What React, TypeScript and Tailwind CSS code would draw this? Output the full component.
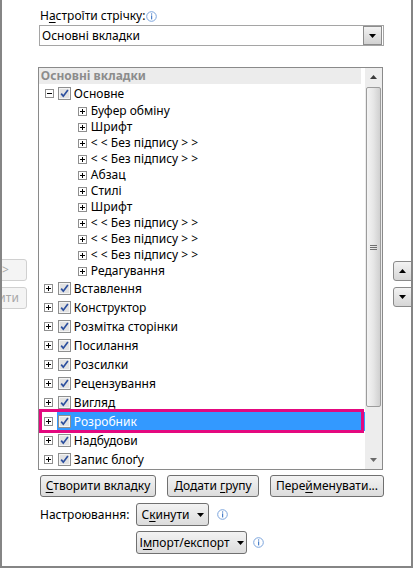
import React from "react";

const childGroups = [
  "Буфер обміну",
  "Шрифт",
  "< < Без підпису > >",
  "< < Без підпису > >",
  "Абзац",
  "Стилі",
  "Шрифт",
  "< < Без підпису > >",
  "< < Без підпису > >",
  "< < Без підпису > >",
  "Редагування",
];

const mainTabs = [
  "Вставлення",
  "Конструктор",
  "Розмітка сторінки",
  "Посилання",
  "Розсилки",
  "Рецензування",
  "Вигляд",
  "Розробник",
  "Надбудови",
  "Запис блоґу",
];

function Expander({ open = false }: { open?: boolean }) {
  return (
    <svg width="9" height="9" className="shrink-0">
      <rect x="0.5" y="0.5" width="8" height="8" fill="#fff" stroke="#8f8f8f" />
      <path d="M2 4.5h5" stroke="#000" />
      {!open && <path d="M4.5 2v5" stroke="#000" />}
    </svg>
  );
}

function Check() {
  return (
    <svg width="13" height="13" className="shrink-0">
      <rect x="0.5" y="0.5" width="12" height="12" fill="#f4f4f4" stroke="#8e8f8f" />
      <rect x="2" y="2" width="9" height="9" fill="#e2e2e2" />
      <path d="M3.2 6.6l2.1 2.6 4.6-6.2" fill="none" stroke="#2c4f9e" strokeWidth="1.7" />
    </svg>
  );
}

function Info() {
  return (
    <svg width="11" height="11" className="shrink-0">
      <circle cx="5.5" cy="5.5" r="4.8" fill="#fff" stroke="#7ba4dc" />
      <rect x="5" y="2.4" width="1.2" height="1.2" fill="#4a7fc8" />
      <rect x="5" y="4.4" width="1.2" height="4" fill="#4a7fc8" />
    </svg>
  );
}

function Caret() {
  return (
    <svg width="7" height="4" className="shrink-0">
      <path d="M0 0h7L3.5 4z" fill="#000" />
    </svg>
  );
}

function Btn({ className, children }: { className: string; children: React.ReactNode }) {
  return (
    <div
      className={`flex items-center justify-center gap-[7px] rounded-[3px] border border-[#707070] bg-gradient-to-b from-[#f3f3f3] to-[#dcdcdc] text-[12px] text-black ${className}`}
    >
      {children}
    </div>
  );
}

export default function App() {
  return (
    <div className="h-[569px] w-[415px] bg-white font-['Noto_Sans',sans-serif] text-[12px] leading-none text-black">
      <div className="flex h-[568px] w-[413px] flex-col border-x-2 border-b-2 border-[#858585]">
        {/* ribbon selector */}
        <div className="ml-[38px] mt-[8px] flex h-[16px] items-center gap-[1px]">
          <span>
            Н<u className="underline-offset-2">а</u>строїти стрічку:
          </span>
          <Info />
        </div>
        <div className="ml-[37px] mt-[1px] flex h-[21px] w-[345px] items-center border border-[#a5a5a5] bg-white">
          <span className="flex-1 pl-[2px]">Основні вкладки</span>
          <div className="mr-[1px] flex h-[19px] w-[19px] items-center justify-center border border-[#8c8c8c] bg-gradient-to-b from-[#f2f2f2] to-[#d2d2d2]">
            <Caret />
          </div>
        </div>

        <div className="mt-[21px] flex">
          {/* add / remove, clipped by the frame */}
          <div className="flex w-[37px] flex-col items-end overflow-hidden pr-[11px] pt-[192px] text-[#a8a8a8]">
            <div className="flex h-[22px] w-[90px] shrink-0 items-center justify-end rounded-[3px] border border-[#d0d0d0] bg-[#f4f4f4] pr-[17px]">
              Додати {">"} {">"}
            </div>
            <div className="mt-[6px] flex h-[22px] w-[90px] shrink-0 items-center justify-end rounded-[3px] border border-[#d0d0d0] bg-[#f4f4f4] pr-[7px]">
              Видалити
            </div>
          </div>

          {/* tabs tree */}
          <div className="flex h-[403px] w-[345px] border border-[#8a8a8a]">
            <div className="flex w-[326px] flex-col">
              <div className="mr-[4px] flex h-[16px] items-center bg-[#ececec] pl-[2px] font-bold text-[#8c8c8c]">
                Основні вкладки
              </div>
              <div className="flex h-[19px] items-center pl-[6px]">
                <Expander open />
                <span className="ml-[4px]">
                  <Check />
                </span>
                <span className="ml-[3px]">Основне</span>
              </div>
              {childGroups.map((name, i) => (
                <div key={i} className="flex h-[16px] items-center pl-[39px]">
                  <Expander />
                  <span className="ml-[4px]">{name}</span>
                </div>
              ))}
              {mainTabs.map((name) => {
                const active = name === "Розробник";
                return (
                  <div key={name} className="relative flex h-[19px] items-center pl-[5px]">
                    <Expander />
                    <div
                      className={`ml-[4px] flex h-full flex-1 items-center pl-[1px] ${
                        active ? "bg-[#3399ff] text-white" : ""
                      }`}
                    >
                      <Check />
                      <span className="ml-[3px]">{name}</span>
                    </div>
                    {active && (
                      <div className="absolute -bottom-[2px] -top-[3px] left-0 right-[1px] border-[3px] border-[#e4087f]" />
                    )}
                  </div>
                );
              })}
            </div>

            {/* scrollbar */}
            <div className="flex w-[17px] flex-col bg-[#ededed]">
              <div className="flex h-[18px] items-center justify-center">
                <svg width="7" height="4">
                  <path d="M0 4h7L3.5 0z" fill="#3c3c3c" />
                </svg>
              </div>
              <div className="mx-[1px] mt-[1px] flex h-[320px] items-center justify-center rounded-[2px] border border-[#9c9c9c] bg-gradient-to-r from-[#f4f4f4] via-[#e6e6e6] to-[#d0d0d0]">
                <svg width="7" height="7">
                  <path d="M0 1.5h7M0 3.5h7M0 5.5h7" stroke="#6f6f6f" />
                </svg>
              </div>
              <div className="flex-1" />
              <div className="flex h-[18px] items-center justify-center">
                <svg width="7" height="4">
                  <path d="M0 0h7L3.5 4z" fill="#6a6a6a" />
                </svg>
              </div>
            </div>
          </div>

          {/* move up / down */}
          <div className="ml-[10px] flex w-[19px] flex-col overflow-hidden pt-[194px]">
            <div className="flex h-[20px] w-[22px] shrink-0 items-center justify-center rounded-l-[3px] border border-[#8a8a8a] bg-gradient-to-b from-[#f3f3f3] to-[#d6d6d6] pr-[3px]">
              <svg width="7" height="4">
                <path d="M0 4h7L3.5 0z" fill="#000" />
              </svg>
            </div>
            <div className="mt-[6px] flex h-[20px] w-[22px] shrink-0 items-center justify-center rounded-l-[3px] border border-[#8a8a8a] bg-gradient-to-b from-[#f3f3f3] to-[#d6d6d6] pr-[3px]">
              <Caret />
            </div>
          </div>
        </div>

        {/* tab / group actions */}
        <div className="ml-[38px] mt-[5px] flex gap-[11px]">
          <Btn className="h-[22px] w-[116px]">
            <span>
              <u className="underline-offset-2">С</u>творити вкладку
            </span>
          </Btn>
          <Btn className="h-[22px] w-[92px]">
            <span>
              Додати <u className="underline-offset-2">г</u>рупу
            </span>
          </Btn>
          <Btn className="h-[22px] w-[114px]">
            <span>
              Пере<u className="underline-offset-2">й</u>менувати...
            </span>
          </Btn>
        </div>

        <div className="ml-[38px] mt-[6px] flex items-center">
          <span className="w-[96px]">Настроювання:</span>
          <Btn className="h-[23px] w-[73px]">
            <span>
              С<u className="underline-offset-2">к</u>инути
            </span>
            <Caret />
          </Btn>
          <span className="ml-[8px]">
            <Info />
          </span>
        </div>
        <div className="ml-[134px] mt-[5px] flex items-center">
          <Btn className="h-[23px] w-[111px]">
            <span>
              І<u className="underline-offset-2">м</u>порт/експорт
            </span>
            <Caret />
          </Btn>
          <span className="ml-[6px]">
            <Info />
          </span>
        </div>
      </div>
    </div>
  );
}
